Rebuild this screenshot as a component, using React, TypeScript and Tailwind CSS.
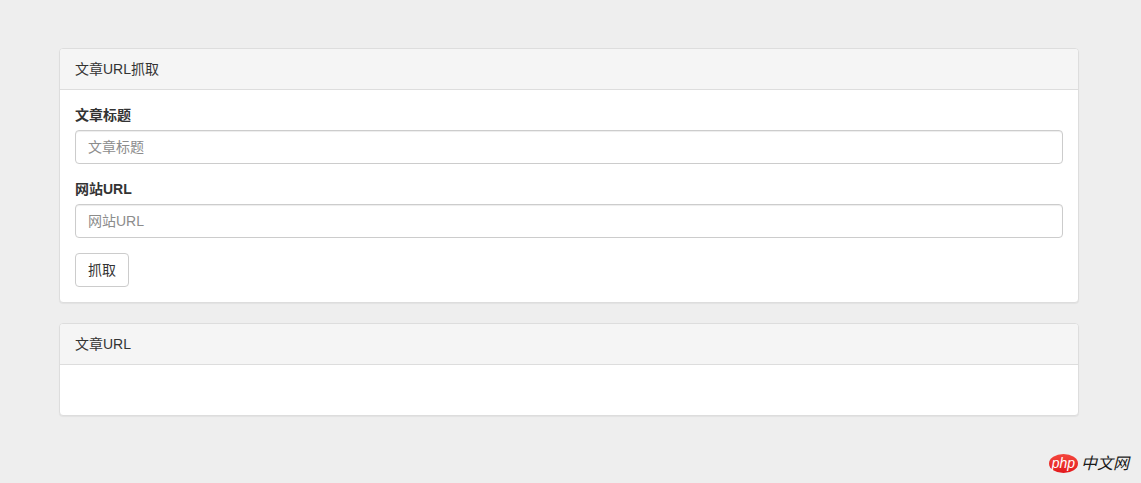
import React from 'react'

function Panel({ title, children }: { title: string; children?: React.ReactNode }) {
  return (
    <div className="bg-white border border-[#dddddd] rounded-[4px] shadow-[0_1px_1px_rgba(0,0,0,0.05)]">
      <div className="h-[41px] px-[15px] flex items-center bg-[#f5f5f5] border-b border-[#dddddd] rounded-t-[3px] text-[14px] text-[#333333]">
        {title}
      </div>
      <div className="p-[15px] min-h-[50px]">{children}</div>
    </div>
  )
}

function Field({ label }: { label: string }) {
  return (
    <div className="mb-[15px]">
      <label className="block mb-[5px] h-[20px] leading-[20px] text-[14px] font-bold text-[#333333]">{label}</label>
      <input
        placeholder={label}
        className="block w-full h-[34px] px-3 text-[14px] bg-white border border-[#cccccc] rounded-[4px] shadow-[inset_0_1px_1px_rgba(0,0,0,0.075)] outline-none placeholder:text-[#8c8c8c]"
      />
    </div>
  )
}

export default function App() {
  return (
    <div className="relative h-[483px] overflow-hidden bg-[#eeeeee] pt-[48px] pl-[59px] pr-[62px] font-['Helvetica_Neue','Liberation_Sans','Noto_Sans_CJK_SC',sans-serif]">
      <div className="flex flex-col gap-[20px]">
        <Panel title="文章URL抓取">
          <form>
            <Field label="文章标题" />
            <Field label="网站URL" />
            <button type="button" className="h-[34px] px-3 text-[14px] text-[#333333] bg-white border border-[#cccccc] rounded-[4px]">
              抓取
            </button>
          </form>
        </Panel>
        <Panel title="文章URL" />
      </div>

      <div className="absolute right-[12px] bottom-[10px] flex items-center gap-[3px]">
        <div className="w-[29px] h-[19px] rounded-[50%] bg-gradient-to-b from-[#f4453c] to-[#e3161c] flex items-center justify-center text-white text-[14px] italic leading-none pb-[2px]">
          php
        </div>
        <span className="text-[16px] leading-none italic text-[#1a1a1a]">中文网</span>
      </div>
    </div>
  )
}
